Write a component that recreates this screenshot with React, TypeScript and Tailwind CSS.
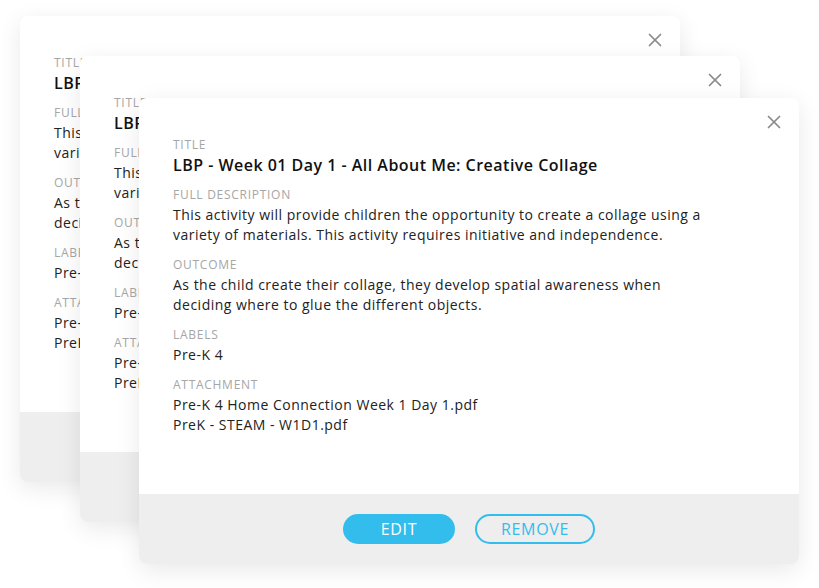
import { X } from "lucide-react";

function Field({ label, lines, strong }: { label: string; lines: string[]; strong?: boolean }) {
  return (
    <div className="flex flex-col">
      <span className="text-[12px] leading-5 uppercase tracking-[0.06em] text-[#a6a6a6]">{label}</span>
      {lines.map((l) => (
        <span
          key={l}
          className={
            strong
              ? "text-[16px] leading-5 font-semibold tracking-[0.03em] text-[#111]"
              : "text-[14px] leading-5 tracking-[0.035em] text-[#222]"
          }
        >
          {l}
        </span>
      ))}
    </div>
  );
}

function ActivityCard({ className }: { className: string }) {
  return (
    <div
      className={`absolute w-[660px] h-[466px] flex flex-col overflow-hidden rounded-lg bg-white shadow-[0_6px_24px_rgba(0,0,0,0.09)] ${className}`}
    >
      <div className="relative h-[396px] shrink-0 px-[34px] pt-[37px] flex flex-col gap-[10px]">
        <button className="absolute right-[14px] top-[13px] text-[#8a8a8a]">
          <X size={22} strokeWidth={1.9} />
        </button>
        <Field label="Title" lines={["LBP - Week 01 Day 1 - All About Me: Creative Collage"]} strong />
        <Field
          label="Full Description"
          lines={[
            "This activity will provide children the opportunity to create a collage using a",
            "variety of materials. This activity requires initiative and independence.",
          ]}
        />
        <Field
          label="Outcome"
          lines={[
            "As the child create their collage, they develop spatial awareness when",
            "deciding where to glue the different objects.",
          ]}
        />
        <Field label="Labels" lines={["Pre-K 4"]} />
        <Field
          label="Attachment"
          lines={["Pre-K 4 Home Connection Week 1 Day 1.pdf", "PreK - STEAM - W1D1.pdf"]}
        />
      </div>
      <div className="flex-1 bg-[#eeeeee] flex items-center justify-center gap-5">
        <button className="w-[112px] h-[30px] rounded-full bg-[#33bdec] text-white text-[16px] font-medium tracking-[0.04em]">
          EDIT
        </button>
        <button className="w-[120px] h-[30px] rounded-full border-2 border-[#33bdec] text-[#33bdec] text-[16px] font-medium tracking-[0.04em]">
          REMOVE
        </button>
      </div>
    </div>
  );
}

export default function App() {
  return (
    <div className="relative w-[819px] h-[588px] bg-white overflow-hidden font-['Open_Sans',sans-serif]">
      <ActivityCard className="left-[20px] top-[16px]" />
      <ActivityCard className="left-[80px] top-[56px]" />
      <ActivityCard className="left-[139px] top-[98px]" />
    </div>
  );
}
